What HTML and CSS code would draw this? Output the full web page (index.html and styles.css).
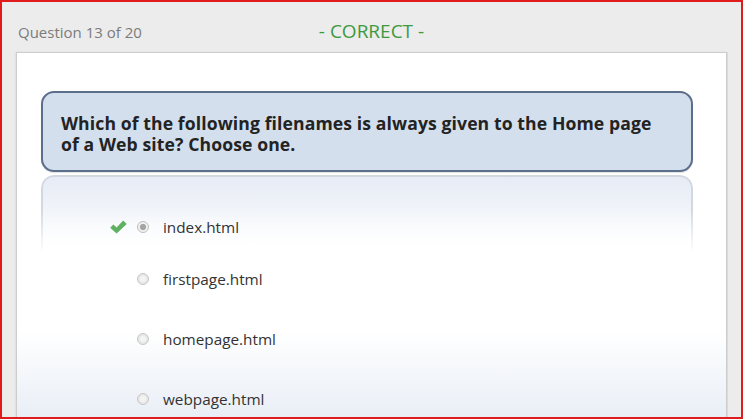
FILE: index.html
```html
<!DOCTYPE html>
<html>
<head>
<meta charset="utf-8">
<link rel="stylesheet" href="styles.css">
</head>
<body>
<div class="frame">
  <header class="header">
    <div class="progress">Question 13 of 20</div>
    <div class="status">- CORRECT -</div>
    <div></div>
  </header>
  <main class="panel">
    <div class="question">Which of the following filenames is always given to the Home page of a Web site? Choose one.</div>
    <div class="options">
      <div class="option first">
        <svg class="check" width="17" height="14" viewBox="0 0 17 14"><path d="M0.2 7.8 L3.4 4.5 L6.6 7.4 L13.2 0.6 L16.7 3.9 L6.6 13.6 Z" fill="#5db15f"/></svg>
        <span class="radio selected"></span>
        <span class="label">index.html</span>
      </div>
      <div class="option">
        <span class="check"></span>
        <span class="radio"></span>
        <span class="label">firstpage.html</span>
      </div>
      <div class="option">
        <span class="check"></span>
        <span class="radio"></span>
        <span class="label">homepage.html</span>
      </div>
      <div class="option">
        <span class="check"></span>
        <span class="radio"></span>
        <span class="label">webpage.html</span>
      </div>
    </div>
  </main>
</div>
</body>
</html>
```
FILE: styles.css
```css
* { box-sizing: border-box; }
html, body { margin: 0; padding: 0; }
body {
  font-family: "Open Sans", "Liberation Sans", sans-serif;
  background: #ececec;
}
.frame {
  width: 743px;
  height: 419px;
  border: 2px solid #e01b1b;
  background: #ececec;
  display: flex;
  flex-direction: column;
  overflow: hidden;
}
.header {
  height: 50px;
  flex: none;
  display: grid;
  grid-template-columns: 1fr auto 1fr;
}
.progress {
  padding: 20px 0 0 16px;
  font-size: 15px;
  line-height: 20px;
  color: #7b7b7b;
}
.status {
  padding-top: 17px;
  font-size: 19px;
  line-height: 24px;
  color: #3d9a3e;
}
.panel {
  flex: 1;
  margin: 0 14px;
  border: 1px solid #cdcdcd;
  border-bottom: none;
  background: linear-gradient(to bottom, #ffffff 0%, #ffffff 74%, #e6ecf5 100%);
  box-shadow: 1px 0 0 #dadada, -1px 0 2px rgba(0,0,0,0.06);
}
.question {
  margin: 38px 33px 0 24px;
  height: 81px;
  border: 2px solid #5b6e8b;
  border-radius: 13px;
  background: #d4dfee;
  padding: 20px 28px 0 18px;
  font-size: 17.6px;
  font-weight: 700;
  line-height: 21px;
  letter-spacing: 0.1px;
  color: #232323;
  box-shadow: 0 1px 1px rgba(0,0,0,0.12);
}
.options {
  position: relative;
  margin-top: 3px;
  padding-top: 30px;
}
.options::before {
  content: "";
  position: absolute;
  left: 24px;
  right: 33px;
  top: 0;
  height: 76px;
  border: 2px solid #d3d8e0;
  border-bottom: none;
  border-radius: 13px 13px 0 0;
  background: linear-gradient(to bottom, #e6ebf5, #ffffff);
  -webkit-mask-image: linear-gradient(to bottom, #000 0%, #000 45%, transparent 100%);
  mask-image: linear-gradient(to bottom, #000 0%, #000 45%, transparent 100%);
}
.option {
  position: relative;
  height: 60px;
  display: flex;
  align-items: center;
  padding-left: 93px;
}
.option.first { height: 44px; }
.check {
  width: 17px;
  height: 14px;
  flex: none;
  margin-right: 10px;
}
.radio {
  width: 12px;
  height: 12px;
  flex: none;
  border-radius: 50%;
  border: 1px solid #c6c6c6;
  background: radial-gradient(circle, #f3f3f3 0, #f3f3f3 35%, #e4e4e4 60%, #fbfbfb 100%);
  margin-right: 14px;
}
.radio.selected {
  border-color: #bdbdbd;
  background: radial-gradient(circle, #a4a4a4 0, #a4a4a4 38%, #eeeeee 50%, #fbfbfb 100%);
}
.label {
  font-size: 15.3px;
  color: #333333;
  line-height: 20px;
}
```
